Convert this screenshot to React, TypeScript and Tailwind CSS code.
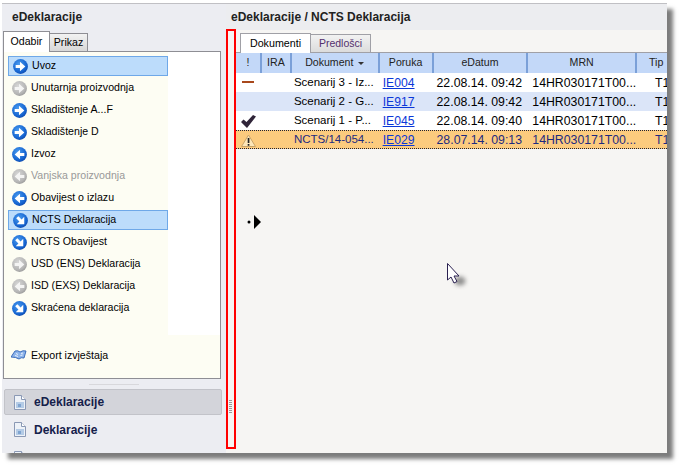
import React from 'react';

type Dir = 'right' | 'left' | 'se';

const arrows: Record<Dir, string> = {
  right: 'M2.500 5.500H6.500V2.500L11.500 7 6.500 11.500V8.500H2.500z',
  left: 'M11.500 5.500H7.500V2.500L2.500 7 7.500 11.500V8.500H11.500z',
  se: 'M3 5 5 3 8 6 10.500 3.500V10.500H3.500L6 8z',
};

const CircleIcon = ({ dir, gray }: { dir: Dir; gray?: boolean }) => (
  <svg width="15" height="15" viewBox="0 0 14 14" className="shrink-0">
    <defs>
      <radialGradient id="iconBlue" cx=".4" cy=".35" r=".75">
        <stop offset="0" stopColor="#4a9cf0" />
        <stop offset=".7" stopColor="#1463d0" />
        <stop offset="1" stopColor="#0c3f9c" />
      </radialGradient>
      <radialGradient id="iconGray" cx=".4" cy=".35" r=".75">
        <stop offset="0" stopColor="#d8d8d8" />
        <stop offset=".7" stopColor="#b4b4b4" />
        <stop offset="1" stopColor="#8e8e8e" />
      </radialGradient>
    </defs>
    <circle cx="7" cy="7" r="6.900" fill={gray ? 'url(#iconGray)' : 'url(#iconBlue)'} />
    <path d={arrows[dir]} fill={gray ? '#f4f4f4' : '#fff'} />
  </svg>
);

const DocIcon = () => (
  <svg width="12" height="15" viewBox="0 0 12 15" className="shrink-0">
    <path d="M.5.5h7l4 4v10H.5z" fill="#eef2f8" stroke="#8a98b4" />
    <path d="M7.500.5v4h4" fill="#fff" stroke="#8a98b4" />
    <rect x="2" y="7" width="8" height="6" fill="#b4cbe6" />
    <rect x="4" y="9" width="3" height="3" fill="#7fa4d0" />
  </svg>
);

const sideItems: { label: string; dir: Dir; gray?: boolean; active?: boolean; muted?: boolean }[] = [
  { label: 'Uvoz', dir: 'right', active: true },
  { label: 'Unutarnja proizvodnja', dir: 'right', gray: true },
  { label: 'Skladištenje A...F', dir: 'right' },
  { label: 'Skladištenje D', dir: 'right' },
  { label: 'Izvoz', dir: 'left' },
  { label: 'Vanjska proizvodnja', dir: 'left', gray: true, muted: true },
  { label: 'Obavijest o izlazu', dir: 'left' },
  { label: 'NCTS Deklaracija', dir: 'se', active: true },
  { label: 'NCTS Obavijest', dir: 'se' },
  { label: 'USD (ENS) Deklaracija', dir: 'right', gray: true },
  { label: 'ISD (EXS) Deklaracija', dir: 'left', gray: true },
  { label: 'Skraćena deklaracija', dir: 'se' },
];

const rows = [
  { mark: 'dash', doc: 'Scenarij 3 - Iz...', msg: 'IE004', date: '22.08.14. 09:42', bg: 'bg-white' },
  { mark: '', doc: 'Scenarij 2 - G...', msg: 'IE917', date: '22.08.14. 09:42', bg: 'bg-[#dbe5f8]' },
  { mark: 'check', doc: 'Scenarij 1 - P...', msg: 'IE045', date: '22.08.14. 09:40', bg: 'bg-white' },
  { mark: 'warn', doc: 'NCTS/14-054...', msg: 'IE029', date: '28.07.14. 09:13', bg: 'bg-[#fccb7e]' },
];

const Mark = ({ type }: { type: string }) => {
  if (type === 'dash') return <div className="w-[12px] h-[2px] ml-[1px] mb-[3px] bg-[#a8481c]" />;
  if (type === 'check')
    return (
      <svg width="15" height="13" viewBox="0 0 15 13">
        <path d="M0 7l2.500-2.500L5.500 7 12 0l3 1.500L6 13z" fill="#2f2438" />
      </svg>
    );
  if (type === 'warn')
    return (
      <svg width="15" height="13" viewBox="0 0 15 13">
        <path d="M7.500 1 14.500 12.500H.5z" fill="#fde6b8" stroke="#c9a468" />
        <path d="M6.700 4h1.700V9H6.700zM6.700 10h1.700v1.700H6.700z" fill="#222" />
      </svg>
    );
  return null;
};

export default function App() {
  return (
    <div className="w-[681px] h-[467px] bg-white pt-[3px] pl-[2px] overflow-hidden font-['Liberation_Sans',sans-serif] text-[10.600px] text-black">
      <div className="relative w-[665px] h-[450px] flex bg-[#f6f5f3] border-t border-[#c0c0c4] shadow-[6px_6px_4px_#7c7c7c]">
        {/* left side */}
        <aside className="w-[224px] h-full flex flex-col bg-[#ecedf2] overflow-hidden">
          <div className="h-[24px] flex items-center pl-[10px] font-bold text-[12px] text-[#222] shrink-0 mt-[1px]">eDeklaracije</div>
          <div className="flex items-end h-[20px] pl-[1px] mt-[2px] shrink-0">
            <div className="relative z-10 w-[47px] h-[21px] -mb-[1px] bg-white border border-[#8e8e94] border-b-0 flex items-center justify-center">Odabir</div>
            <div className="w-[38px] h-[18px] bg-gradient-to-b from-[#f2f2f2] to-[#d8d8d8] border border-[#8e8e94] border-b-0 border-l-0 flex items-center justify-center">Prikaz</div>
          </div>
          <div className="ml-[1px] w-[218px] h-[328px] border border-[#8e8e94] bg-[#fdfdf3] flex flex-col shrink-0">
            <div className="flex h-[283px] shrink-0">
              <div className="w-[164px] pl-[4px] pt-[3px] shrink-0">
                {sideItems.map((it) => (
                  <div key={it.label} className="h-[22px] flex items-center">
                    <div
                      className={`h-[20px] w-[160px] flex items-center gap-[4px] pl-[4px] ${it.active ? 'border border-[#6ea8e8] bg-[#bcdcfb] pl-[3px]' : ''} ${it.muted ? 'text-[#999]' : ''}`}
                    >
                      <CircleIcon dir={it.dir} gray={it.gray} />
                      <span className="whitespace-nowrap">{it.label}</span>
                    </div>
                  </div>
                ))}
              </div>
              <div className="flex-1 bg-white" />
            </div>
            <div className="flex items-center gap-[4px] pl-[7px] mt-[13px]">
              <svg width="16" height="11" viewBox="0 0 16 11" className="shrink-0">
                <path d="M0 7 4 1q3-1 5 1 3-2 6-1l-2 7q-3-1-5 1-3-2-8-2z" fill="#8db4ea" stroke="#2f62b4" strokeWidth=".9" />
                <path d="M5 3.500l2 1M4 5.500l3 1M10 3.500l2-.5M9.500 5.500l2-.5" stroke="#fff" strokeWidth=".8" />
              </svg>
              <span className="whitespace-nowrap">Export izvještaja</span>
            </div>
          </div>
          <div className="h-[10px] shrink-0 flex items-center justify-center">
            <div className="w-[50px] h-[1px] bg-[#d8d8dc]" />
          </div>
          <div className="ml-[2px] w-[218px] h-[26px] flex items-center gap-[8px] pl-[9px] bg-[#d3d4da] border border-[#c2c3c9] rounded-[2px] font-bold text-[12px] text-[#15204a] shrink-0">
            <DocIcon />
            eDeklaracije
          </div>
          <div className="ml-[2px] h-[29px] flex items-center gap-[8px] pl-[10px] font-bold text-[12px] text-[#15204a] shrink-0">
            <DocIcon />
            Deklaracije
          </div>
          <div className="ml-[12px] mt-[7px]">
            <DocIcon />
          </div>
        </aside>

        {/* right side */}
        <main className="flex-1 min-w-0 h-full flex flex-col overflow-hidden">
          <div className="h-[26px] shrink-0 flex items-center pl-[5px] bg-[#ecedf0] font-bold text-[12px] text-[#222]">
            eDeklaracije / NCTS Deklaracija
          </div>
          <div className="flex-1 min-w-0 pl-[10px] pt-[2px]">
            <div className="flex items-end h-[20px]">
              <div className="relative z-10 w-[71px] h-[20px] -mb-[1px] ml-[4px] bg-white border border-[#a0a0a6] border-b-0 flex items-center justify-center text-[10.700px]">Dokumenti</div>
              <div className="w-[60px] h-[18px] bg-gradient-to-b from-[#f2f2f2] to-[#dcdcdc] border border-[#a0a0a6] border-b-0 border-l-0 flex items-center justify-center text-[10.500px] text-[#54306e]">Predlošci</div>
            </div>
            <div className="border-t border-[#a0a0a6]">
              <div className="h-[20px] flex items-center bg-[#c3d8f8] text-center text-[#222] whitespace-nowrap">
                <div className="w-[26px] h-full flex items-center justify-center border-r-2 border-[#7ba0d8]">!</div>
                <div className="w-[30px] h-full flex items-center justify-center border-r-2 border-[#7ba0d8]">IRA</div>
                <div className="w-[88px] h-full flex items-center justify-center gap-[5px] border-r-2 border-[#7ba0d8]">
                  Dokument
                  <span className="border-x-[3px] border-t-[3px] border-x-transparent border-t-[#333]" />
                </div>
                <div className="w-[54px] h-full flex items-center justify-center border-r-2 border-[#7ba0d8]">Poruka</div>
                <div className="w-[95px] h-full flex items-center justify-center border-r-2 border-[#7ba0d8]">eDatum</div>
                <div className="w-[109px] h-full flex items-center justify-center border-r-2 border-[#7ba0d8]">MRN</div>
                <div className="w-[30px] h-full flex items-center pl-[12px]">Tip</div>
              </div>
              {rows.map((r) => (
                <div
                  key={r.msg}
                  className={`h-[19px] pt-[1px] flex items-center whitespace-nowrap text-[11.500px] ${r.bg} ${r.mark === 'warn' ? 'border-y border-dotted border-[#223] text-[#1c2a80]' : ''}`}
                >
                  <div className="w-[26px] pl-[5px] flex items-center"><Mark type={r.mark} /></div>
                  <div className="w-[30px]" />
                  <div className="w-[88px] pl-[2px]">{r.doc}</div>
                  <div className="w-[54px] pl-[3px] text-[12.200px] text-[#0a37d8] underline">{r.msg}</div>
                  <div className="w-[95px] pl-[3px] text-[12.300px]">{r.date}</div>
                  <div className="w-[109px] pl-[4px] text-[12.300px]">14HR030171T00...</div>
                  <div className="w-[30px] pl-[18px] text-[12.300px]">T1</div>
                </div>
              ))}
            </div>
          </div>
        </main>

        {/* annotation and pointers lying over the window */}
        <div className="absolute left-[224px] top-[25px] w-[10px] h-[420px] border-2 border-[#f00]" />
        <div className="absolute left-[227px] top-[396px] w-[3px] h-[14px] bg-[repeating-linear-gradient(#999_0_1px,transparent_1px_2px)]" />
        <svg className="absolute left-[245px] top-[210px]" width="16" height="16" viewBox="0 0 16 16">
          <circle cx="2" cy="8" r="1.500" fill="#000" />
          <path d="M7 1l7 7-7 7z" fill="#000" />
        </svg>
        <svg className="absolute left-[444px] top-[258px]" width="26" height="30" viewBox="0 0 26 30">
          <defs>
            <filter id="cursorShadow" x="-50%" y="-50%" width="200%" height="200%">
              <feGaussianBlur stdDeviation="2" />
            </filter>
          </defs>
          <ellipse cx="14" cy="19" rx="5.500" ry="4.500" fill="#666" opacity=".7" filter="url(#cursorShadow)" />
          <path d="M1.500 1.500V18l3.500-3 3 6 3-1.500-3-5.500h5z" fill="#fff" stroke="#2a2050" />
        </svg>
      </div>
    </div>
  );
}
